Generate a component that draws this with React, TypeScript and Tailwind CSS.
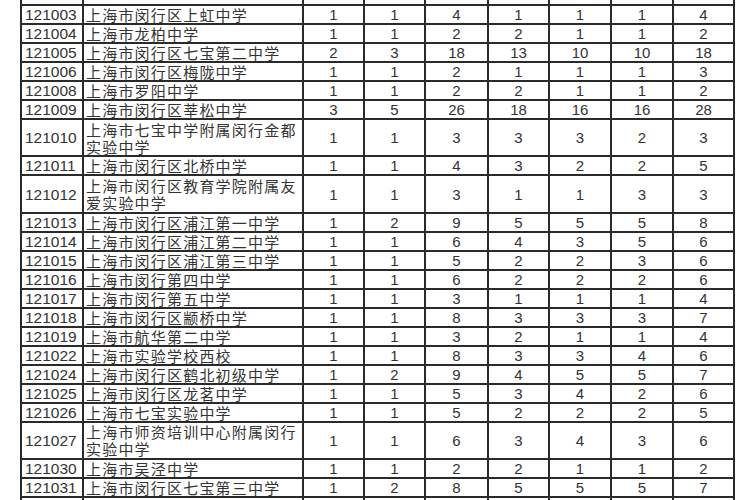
type Row = { code: string; name: string[]; nums: number[] };

const rows: Row[] = [
  { code: '121003', name: ['上海市闵行区上虹中学'], nums: [1, 1, 4, 1, 1, 1, 4] },
  { code: '121004', name: ['上海市龙柏中学'], nums: [1, 1, 2, 2, 1, 1, 2] },
  { code: '121005', name: ['上海市闵行区七宝第二中学'], nums: [2, 3, 18, 13, 10, 10, 18] },
  { code: '121006', name: ['上海市闵行区梅陇中学'], nums: [1, 1, 2, 1, 1, 1, 3] },
  { code: '121008', name: ['上海市罗阳中学'], nums: [1, 1, 2, 2, 1, 1, 2] },
  { code: '121009', name: ['上海市闵行区莘松中学'], nums: [3, 5, 26, 18, 16, 16, 28] },
  { code: '121010', name: ['上海市七宝中学附属闵行金都', '实验中学'], nums: [1, 1, 3, 3, 3, 2, 3] },
  { code: '121011', name: ['上海市闵行区北桥中学'], nums: [1, 1, 4, 3, 2, 2, 5] },
  { code: '121012', name: ['上海市闵行区教育学院附属友', '爱实验中学'], nums: [1, 1, 3, 1, 1, 3, 3] },
  { code: '121013', name: ['上海市闵行区浦江第一中学'], nums: [1, 2, 9, 5, 5, 5, 8] },
  { code: '121014', name: ['上海市闵行区浦江第二中学'], nums: [1, 1, 6, 4, 3, 5, 6] },
  { code: '121015', name: ['上海市闵行区浦江第三中学'], nums: [1, 1, 5, 2, 2, 3, 6] },
  { code: '121016', name: ['上海市闵行第四中学'], nums: [1, 1, 6, 2, 2, 2, 6] },
  { code: '121017', name: ['上海市闵行第五中学'], nums: [1, 1, 3, 1, 1, 1, 4] },
  { code: '121018', name: ['上海市闵行区颛桥中学'], nums: [1, 1, 8, 3, 3, 3, 7] },
  { code: '121019', name: ['上海市航华第二中学'], nums: [1, 1, 3, 2, 1, 1, 4] },
  { code: '121022', name: ['上海市实验学校西校'], nums: [1, 1, 8, 3, 3, 4, 6] },
  { code: '121024', name: ['上海市闵行区鹤北初级中学'], nums: [1, 2, 9, 4, 5, 5, 7] },
  { code: '121025', name: ['上海市闵行区龙茗中学'], nums: [1, 1, 5, 3, 4, 2, 6] },
  { code: '121026', name: ['上海市七宝实验中学'], nums: [1, 1, 5, 2, 2, 2, 5] },
  { code: '121027', name: ['上海市师资培训中心附属闵行', '实验中学'], nums: [1, 1, 6, 3, 4, 3, 6] },
  { code: '121030', name: ['上海市吴泾中学'], nums: [1, 1, 2, 2, 1, 1, 2] },
  { code: '121031', name: ['上海市闵行区七宝第三中学'], nums: [1, 2, 8, 5, 5, 5, 7] },
];

const cell = 'border-x-2 border-b-2 border-[#2a2a2a] p-0';

export default function App() {
  return (
    <div className="h-[500px] w-[750px] overflow-hidden bg-white">
      <table
        className="ml-[20px] w-[713px] table-fixed border-collapse text-[#333]"
        style={{ fontFamily: '"Liberation Sans", "Noto Sans CJK SC", sans-serif' }}
      >
        <colgroup>
          <col className="w-[62px]" />
          <col className="w-[220px]" />
          <col className="w-[61px]" />
          <col className="w-[61px]" />
          <col className="w-[63px]" />
          <col className="w-[61px]" />
          <col className="w-[62px]" />
          <col className="w-[62px]" />
          <col className="w-[61px]" />
        </colgroup>
        <tbody>
          {/* tail of the row above, cut off by the crop */}
          <tr className="h-[5px]">
            {Array.from({ length: 9 }).map((_, i) => <td key={i} className={cell} />)}
          </tr>
          {rows.map(r => (
            <tr key={r.code} className={r.name.length > 1 ? 'h-[37.4px]' : 'h-[18.7px]'}>
              <td className={`${cell} pl-[3px] text-[15.5px] leading-[17px]`}>{r.code}</td>
              <td
                className={`${cell} pl-[2px] text-[15px] leading-[17px] tracking-[1.2px] whitespace-nowrap`}
                style={{ fontFamily: '"Noto Sans CJK SC", sans-serif' }}
              >
                {r.name.map((l, i) => <div key={i}>{l}</div>)}
              </td>
              {r.nums.map((n, i) => (
                <td key={i} className={`${cell} text-center text-[15px] leading-[17px]`}>{n}</td>
              ))}
            </tr>
          ))}
          <tr className="h-[37.4px]">
            <td className={cell} />
            <td
              className={`${cell} pl-[2px] align-top pt-[1px] text-[15px] leading-[17px] tracking-[1.2px] whitespace-nowrap`}
              style={{ fontFamily: '"Noto Sans CJK SC", sans-serif' }}
            >
              <div>华东师范大学第二附属中学附属</div>
              <div>紫竹分校</div>
            </td>
            {Array.from({ length: 7 }).map((_, i) => <td key={i} className={cell} />)}
          </tr>
        </tbody>
      </table>
    </div>
  );
}
